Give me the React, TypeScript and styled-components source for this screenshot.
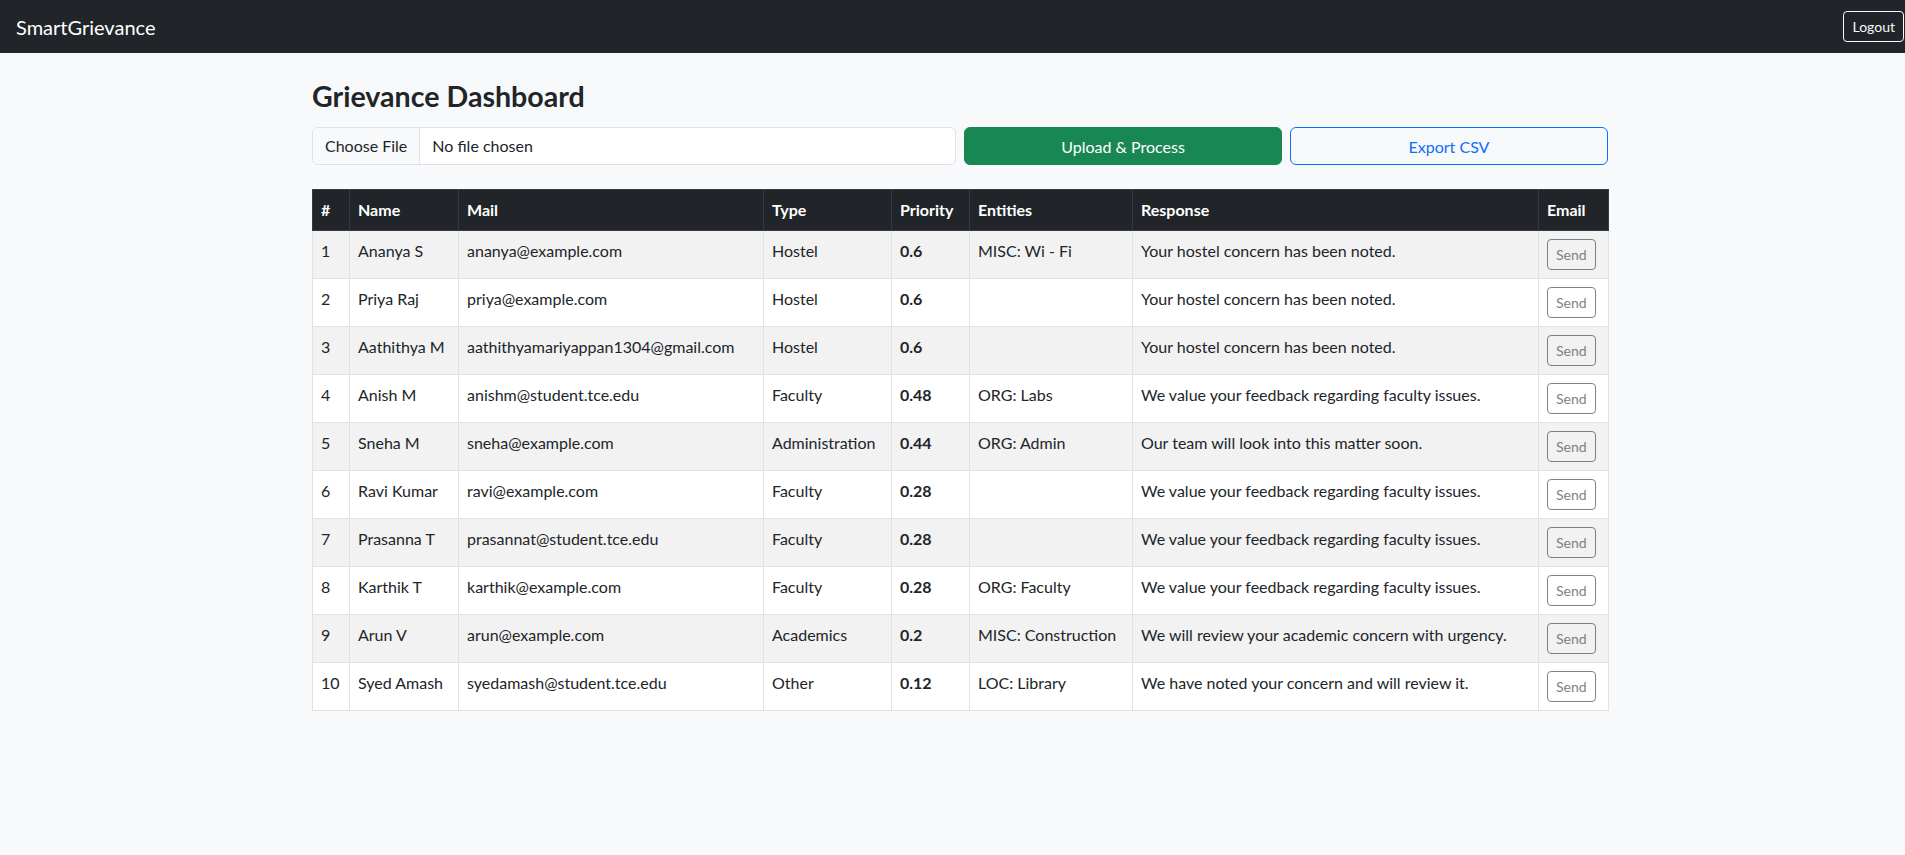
import React from "react";
import styled, { createGlobalStyle, css } from "styled-components";

const GlobalStyle = createGlobalStyle`
  *, *::before, *::after { box-sizing: border-box; }
  body {
    margin: 0;
    background: #f8f9fa;
    color: #212529;
    font-family: Lato, "Noto Sans", sans-serif;
    font-size: 16px;
    line-height: 1.5;
  }
`;

const Navbar = styled.nav`
  height: 53px;
  background: #212529;
  display: flex;
  align-items: center;
  justify-content: space-between;
  padding: 0 1px 0 16px;
`;

const Brand = styled.span`
  color: #fff;
  font-size: 20px;
  line-height: 30px;
`;

const LogoutButton = styled.button`
  font-family: inherit;
  font-size: 14px;
  line-height: 21px;
  padding: 4px 8px;
  color: #f8f9fa;
  background: transparent;
  border: 1px solid #f8f9fa;
  border-radius: 4px;
  cursor: pointer;
`;

const Container = styled.main`
  width: 1296px;
  margin: 24px 0 0 312px;
`;

const Title = styled.h2`
  margin: 0 0 12px;
  font-size: 28.6px;
  font-weight: 700;
  line-height: 38px;
  color: #212529;
`;

const Toolbar = styled.div`
  display: grid;
  grid-template-columns: 644px 318px 318px;
  gap: 8px;
  margin-bottom: 24px;
`;

const FileField = styled.label`
  display: flex;
  align-items: stretch;
  height: 38px;
  background: #fff;
  border: 1px solid #dee2e6;
  border-radius: 6px;
  overflow: hidden;
  cursor: pointer;
`;

const HiddenInput = styled.input`
  display: none;
`;

const FileButton = styled.span`
  display: flex;
  align-items: center;
  padding: 0 12px;
  background: #f8f9fa;
  border-right: 1px solid #dee2e6;
  color: #212529;
  font-size: 16px;
`;

const FileName = styled.span`
  display: flex;
  align-items: center;
  padding: 0 12px;
  color: #212529;
`;

const ActionButton = styled.button<{ $variant: "success" | "outline-primary" }>`
  height: 38px;
  font-family: inherit;
  font-size: 16px;
  border-radius: 6px;
  cursor: pointer;
  ${(p) =>
    p.$variant === "success"
      ? css`
          background: #198754;
          border: 1px solid #198754;
          color: #fff;
        `
      : css`
          background: transparent;
          border: 1px solid #0d6efd;
          color: #0d6efd;
        `}
`;

const Table = styled.table`
  width: 1296px;
  table-layout: fixed;
  border-collapse: collapse;
  margin-bottom: 16px;
`;

const HeadCell = styled.th`
  background: #212529;
  color: #fff;
  font-weight: 700;
  text-align: left;
  vertical-align: top;
  padding: 8px;
  border: 1px solid #373b3e;
  white-space: nowrap;
`;

const Row = styled.tr<{ $striped: boolean }>`
  background: ${(p) => (p.$striped ? "#f2f2f2" : "#fff")};
`;

const Cell = styled.td<{ $bold?: boolean }>`
  padding: 8px;
  vertical-align: top;
  border: 1px solid #dee2e6;
  font-weight: ${(p) => (p.$bold ? 700 : 400)};
  white-space: nowrap;
  overflow: hidden;
  color: #212529;
`;

const SendButton = styled.button`
  font-family: inherit;
  font-size: 14px;
  line-height: 21px;
  padding: 4px 8px;
  color: #6c757d;
  background: transparent;
  border: 1px solid #6c757d;
  border-radius: 4px;
  opacity: 0.9;
  display: block;
`;

const columns = [
  { label: "#", width: 37 },
  { label: "Name", width: 109 },
  { label: "Mail", width: 305 },
  { label: "Type", width: 128 },
  { label: "Priority", width: 78 },
  { label: "Entities", width: 163 },
  { label: "Response", width: 406 },
  { label: "Email", width: 70 },
];

const rows = [
  ["Ananya S", "ananya@example.com", "Hostel", "0.6", "MISC: Wi - Fi", "Your hostel concern has been noted."],
  ["Priya Raj", "priya@example.com", "Hostel", "0.6", "", "Your hostel concern has been noted."],
  ["Aathithya M", "aathithyamariyappan1304@gmail.com", "Hostel", "0.6", "", "Your hostel concern has been noted."],
  ["Anish M", "anishm@student.tce.edu", "Faculty", "0.48", "ORG: Labs", "We value your feedback regarding faculty issues."],
  ["Sneha M", "sneha@example.com", "Administration", "0.44", "ORG: Admin", "Our team will look into this matter soon."],
  ["Ravi Kumar", "ravi@example.com", "Faculty", "0.28", "", "We value your feedback regarding faculty issues."],
  ["Prasanna T", "prasannat@student.tce.edu", "Faculty", "0.28", "", "We value your feedback regarding faculty issues."],
  ["Karthik T", "karthik@example.com", "Faculty", "0.28", "ORG: Faculty", "We value your feedback regarding faculty issues."],
  ["Arun V", "arun@example.com", "Academics", "0.2", "MISC: Construction", "We will review your academic concern with urgency."],
  ["Syed Amash", "syedamash@student.tce.edu", "Other", "0.12", "LOC: Library", "We have noted your concern and will review it."],
];

export default function App() {
  return (
    <>
      <GlobalStyle />
      <Navbar>
        <Brand>SmartGrievance</Brand>
        <LogoutButton>Logout</LogoutButton>
      </Navbar>
      <Container>
        <Title>Grievance Dashboard</Title>
        <Toolbar>
          <FileField>
            <HiddenInput type="file" />
            <FileButton>Choose File</FileButton>
            <FileName>No file chosen</FileName>
          </FileField>
          <ActionButton $variant="success">Upload &amp; Process</ActionButton>
          <ActionButton $variant="outline-primary">Export CSV</ActionButton>
        </Toolbar>
        <Table>
          <colgroup>
            {columns.map((c) => (
              <col key={c.label} style={{ width: c.width }} />
            ))}
          </colgroup>
          <thead>
            <tr>
              {columns.map((c) => (
                <HeadCell key={c.label}>{c.label}</HeadCell>
              ))}
            </tr>
          </thead>
          <tbody>
            {rows.map((r, i) => (
              <Row key={i} $striped={i % 2 === 0}>
                <Cell>{i + 1}</Cell>
                <Cell>{r[0]}</Cell>
                <Cell>{r[1]}</Cell>
                <Cell>{r[2]}</Cell>
                <Cell $bold>{r[3]}</Cell>
                <Cell>{r[4]}</Cell>
                <Cell>{r[5]}</Cell>
                <Cell>
                  <SendButton disabled>Send</SendButton>
                </Cell>
              </Row>
            ))}
          </tbody>
        </Table>
      </Container>
    </>
  );
}
